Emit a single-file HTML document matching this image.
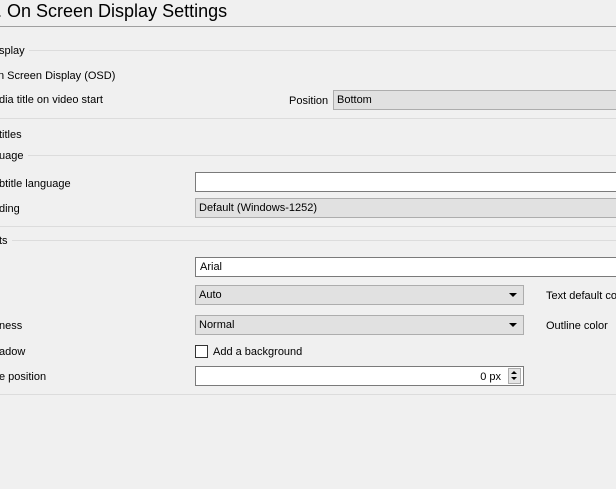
<!DOCTYPE html>
<html><head><meta charset="utf-8"><style>
body{margin:0;width:616px;height:489px;background:#f0f0f0;position:relative;overflow:hidden;font-family:"Liberation Sans",sans-serif;font-size:11px;color:#000}
.a{position:absolute;white-space:nowrap}
.l{position:absolute;height:1px;background:#dcdcdc;right:0}
.in{position:absolute;background:#fff;border:1px solid #7a7a7a;box-sizing:border-box}
.cb{position:absolute;background:#e1e1e1;border:1px solid #adadad;box-sizing:border-box;padding-left:3px;line-height:19px}
.arr{position:absolute;right:6px;top:7px;width:0;height:0;border-left:4px solid transparent;border-right:4px solid transparent;border-top:4px solid #000}
</style></head><body>
<div class="a" style="left:-3px;top:0px;font-size:18px;line-height:22px">. On Screen Display Settings</div>
<div class="l" style="left:0;top:26px;background:#a0a0a0"></div>
<div class="a" style="left:-1px;top:45px">splay</div>
<div class="l" style="left:29px;top:50px"></div>
<div class="a" style="left:-2px;top:70px">n Screen Display (OSD)</div>
<div class="a" style="left:-1px;top:94px">dia title on video start</div>
<div class="a" style="left:289px;top:95px">Position</div>
<div class="cb" style="left:333px;top:90px;width:300px;height:20px">Bottom</div>
<div class="l" style="left:0;top:118px"></div>
<div class="a" style="left:-1px;top:129px">titles</div>
<div class="a" style="left:-1px;top:150px">uage</div>
<div class="l" style="left:28px;top:155px"></div>
<div class="a" style="left:-1px;top:178px">btitle language</div>
<div class="in" style="left:195px;top:172px;width:440px;height:20px"></div>
<div class="a" style="left:-1px;top:203px">ding</div>
<div class="cb" style="left:195px;top:198px;width:440px;height:20px">Default (Windows-1252)</div>
<div class="l" style="left:0;top:226px"></div>
<div class="a" style="left:-1px;top:235px">ts</div>
<div class="l" style="left:12px;top:240px"></div>
<div class="in" style="left:195px;top:257px;width:440px;height:20px;padding-left:4px;line-height:19px">Arial</div>
<div class="cb" style="left:195px;top:285px;width:329px;height:20px">Auto<div class="arr"></div></div>
<div class="a" style="left:546px;top:290px">Text default co</div>
<div class="a" style="left:-1px;top:320px">ness</div>
<div class="cb" style="left:195px;top:315px;width:329px;height:20px">Normal<div class="arr"></div></div>
<div class="a" style="left:546px;top:320px">Outline color</div>
<div class="a" style="left:-1px;top:346px">adow</div>
<div class="a" style="left:195px;top:345px;width:13px;height:13px;box-sizing:border-box;border:1px solid #333;background:#fff"></div>
<div class="a" style="left:213px;top:346px">Add a background</div>
<div class="a" style="left:-1px;top:371px">e position</div>
<div class="in" style="left:195px;top:366px;width:329px;height:20px">
 <div class="a" style="right:22px;top:4px">0 px</div>
 <div class="a" style="right:2px;top:1px;width:13px;height:16px;background:#e5e5e5;border:1px solid #adadad;box-sizing:border-box">
  <div class="a" style="left:2px;top:2px;border-left:3px solid transparent;border-right:3px solid transparent;border-bottom:3px solid #000"></div>
  <div class="a" style="left:2px;top:8px;border-left:3px solid transparent;border-right:3px solid transparent;border-top:3px solid #000"></div>
 </div>
</div>
<div class="l" style="left:0;top:394px"></div>
</body></html>
